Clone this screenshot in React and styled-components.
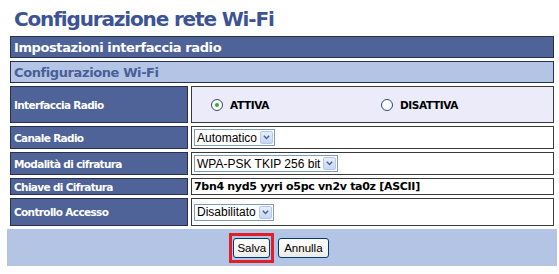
import React, { useState } from 'react'
import styled, { createGlobalStyle } from 'styled-components'

const GlobalStyle = createGlobalStyle`
  html, body {
    margin: 0;
    padding: 0;
    background: #ffffff;
  }
  body {
    font-family: "DejaVu Sans", Verdana, sans-serif;
  }
`

const Page = styled.div`
  width: 559px;
  height: 274px;
  padding: 6px 5px 0 8px;
  box-sizing: border-box;
  overflow: hidden;
`

const Title = styled.h1`
  margin: 0 0 3px 6px;
  font-size: 20px;
  line-height: 27px;
  font-weight: bold;
  color: #3c5394;
  letter-spacing: -1.15px;
`

const Table = styled.div`
  display: flex;
  flex-direction: column;
  gap: 3px;
  padding-left: 2px;
`

const Bar = styled.div`
  height: 22px;
  box-sizing: border-box;
  border: 1px solid #27314e;
  background: ${p => (p.$light ? '#b3c4e5' : '#4f6399')};
  color: ${p => (p.$light ? '#4a5f99' : '#ffffff')};
  font-size: 13px;
  font-weight: bold;
  letter-spacing: -0.4px;
  display: flex;
  align-items: center;
  padding-left: 3px;
`

const Row = styled.div`
  display: grid;
  grid-template-columns: 178px 1fr;
  gap: 3px;
  height: ${p => p.$h}px;
`

const Label = styled.div`
  box-sizing: border-box;
  border: 1px solid #27314e;
  background: #4f6399;
  color: #ffffff;
  font-size: 10.5px;
  font-weight: bold;
  letter-spacing: -0.65px;
  display: flex;
  align-items: center;
  padding-left: 3px;
`

const Value = styled.div`
  box-sizing: border-box;
  border: 1px solid #3a3a3a;
  background: ${p => (p.$tint ? '#ebebfa' : '#ffffff')};
  display: flex;
  align-items: center;
  padding-left: 2px;
  font-size: 11px;
  font-weight: bold;
  letter-spacing: -0.3px;
  color: #000000;
`

const RadioGroup = styled.div`
  display: grid;
  grid-template-columns: 170px 170px;
  justify-items: start;
  padding-left: 17px;
`

const RadioOption = styled.label`
  display: flex;
  align-items: center;
  gap: 7px;
  font-size: 10.5px;
  font-weight: bold;
  letter-spacing: -0.4px;
  cursor: pointer;
`

const RadioDot = styled.span`
  width: 10px;
  height: 10px;
  border-radius: 50%;
  border: 1px solid #2f4a6e;
  background: #ffffff;
  display: flex;
  align-items: center;
  justify-content: center;
  &::after {
    content: '';
    width: 4px;
    height: 4px;
    border-radius: 50%;
    background: ${p => (p.$on ? '#2cb52c' : 'transparent')};
  }
`

const Select = styled.div`
  display: flex;
  align-items: center;
  height: 17px;
  box-sizing: border-box;
  border: 1px solid #7f9db9;
  background: #ffffff;
  font-family: "Liberation Sans", Arial, sans-serif;
  font-size: 12px;
  font-weight: normal;
  letter-spacing: 0;
  padding-left: 2px;
  gap: 3px;
`

const Arrow = styled.span`
  width: 13px;
  height: 13px;
  margin-right: 1px;
  box-sizing: border-box;
  border: 1px solid #b6c8ea;
  border-radius: 2px;
  background: linear-gradient(#e6eefc, #c5d6f7);
  display: flex;
  align-items: center;
  justify-content: center;
`

const Footer = styled.div`
  margin: 3px -3px 0 -1px;
  height: 37px;
  background: #b3c4e5;
  display: flex;
  align-items: center;
  justify-content: center;
  gap: 4px;
  padding-right: 6px;
`

const Highlight = styled.div`
  border: 3px solid #e02027;
  padding: 2px 1px;
  display: flex;
`

const Button = styled.button`
  font-family: "Liberation Sans", Arial, sans-serif;
  font-size: 11.5px;
  height: 20px;
  padding: 0 ${p => (p.$wide ? 5 : 3)}px;
  background: linear-gradient(#ffffff, #ecebe6);
  border: 1px solid #003c74;
  border-radius: 3px;
  color: #000000;
  cursor: pointer;
`

function Chevron() {
  return (
    <svg width="7" height="5" viewBox="0 0 7 5">
      <path d="M0.8 0.8 L3.5 3.6 L6.2 0.8" fill="none" stroke="#4d6185" strokeWidth="1.4" />
    </svg>
  )
}

function Dropdown({ value }) {
  return (
    <Select>
      {value}
      <Arrow><Chevron /></Arrow>
    </Select>
  )
}

function App() {
  const [active, setActive] = useState(true)
  return (
    <Page>
      <GlobalStyle />
      <Title>Configurazione rete Wi-Fi</Title>
      <Table>
        <Bar>Impostazioni interfaccia radio</Bar>
        <Bar $light>Configurazione Wi-Fi</Bar>
        <Row $h={37}>
          <Label>Interfaccia Radio</Label>
          <Value $tint>
            <RadioGroup>
              <RadioOption onClick={() => setActive(true)}>
                <RadioDot $on={active} />ATTIVA
              </RadioOption>
              <RadioOption onClick={() => setActive(false)}>
                <RadioDot $on={!active} />DISATTIVA
              </RadioOption>
            </RadioGroup>
          </Value>
        </Row>
        <Row $h={23}>
          <Label>Canale Radio</Label>
          <Value><Dropdown value="Automatico" /></Value>
        </Row>
        <Row $h={23}>
          <Label>Modalità di cifratura</Label>
          <Value><Dropdown value="WPA-PSK TKIP 256 bit" /></Value>
        </Row>
        <Row $h={17}>
          <Label>Chiave di Cifratura</Label>
          <Value>7bn4 nyd5 yyri o5pc vn2v ta0z [ASCII]</Value>
        </Row>
        <Row $h={28}>
          <Label>Controllo Accesso</Label>
          <Value><Dropdown value="Disabilitato" /></Value>
        </Row>
      </Table>
      <Footer>
        <Highlight><Button>Salva</Button></Highlight>
        <Button $wide>Annulla</Button>
      </Footer>
    </Page>
  )
}

export default App
